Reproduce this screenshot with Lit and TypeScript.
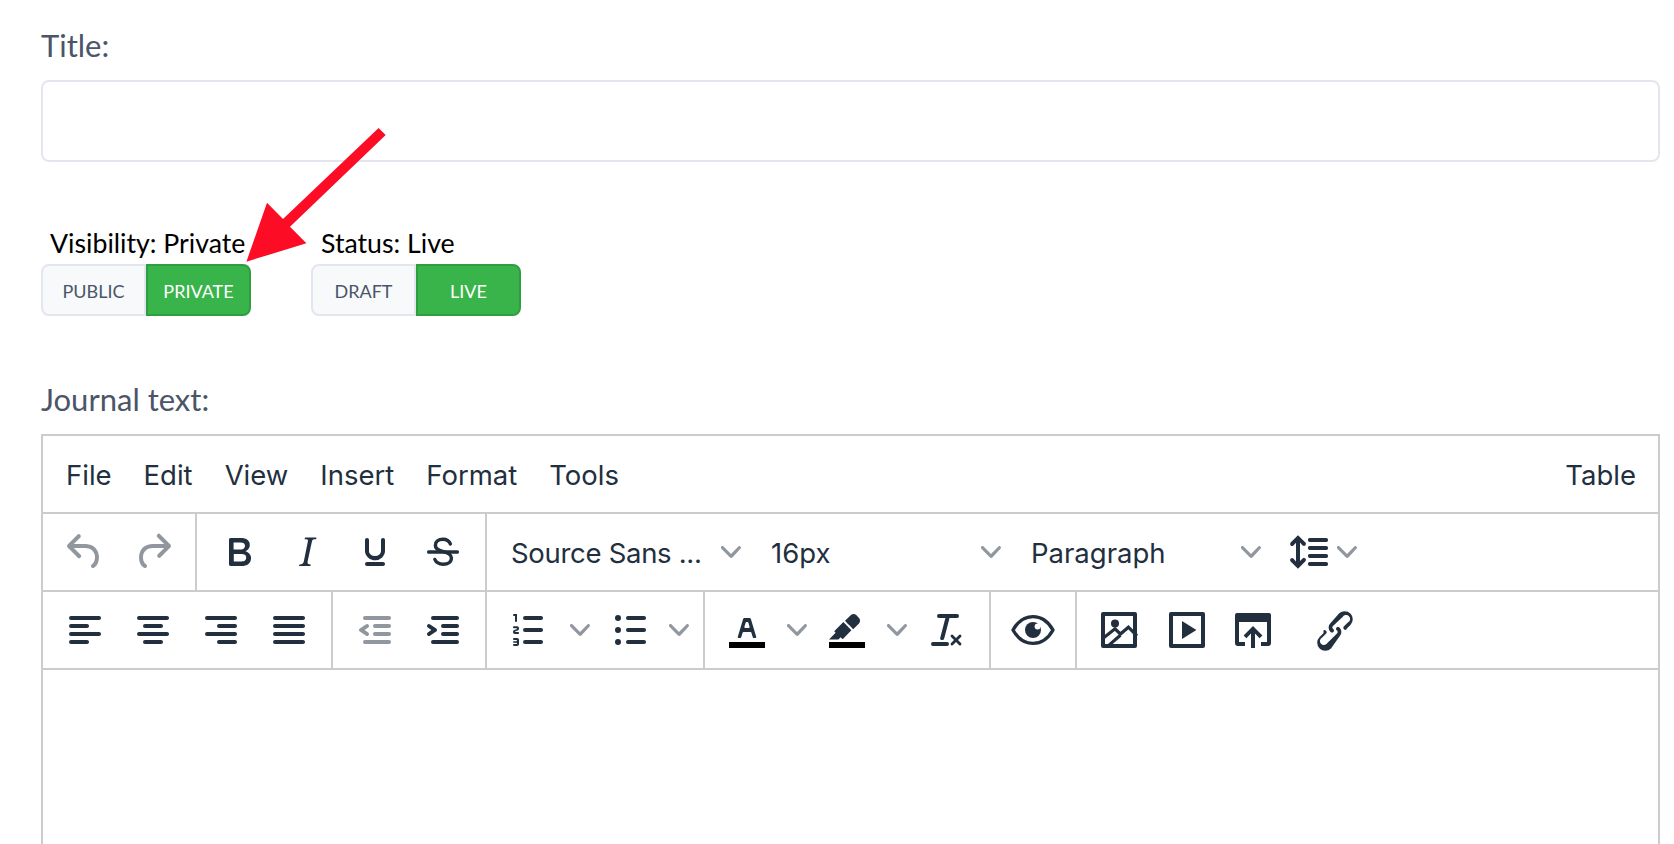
import { LitElement, html, css, svg } from "lit";
import { customElement } from "lit/decorators.js";

const P: Record<string, any> = {
  undo: svg`<path d="M6.4 8H12c3.7 0 6.2 2 6.8 5.1.6 2.7-.4 5.6-2.3 6.8a1 1 0 01-1-1.8c1.1-.6 1.8-2.7 1.4-4.6-.5-2.1-2.1-3.5-4.9-3.5H6.4l3.3 3.3a1 1 0 11-1.4 1.4l-5-5a1 1 0 010-1.4l5-5a1 1 0 011.4 1.4L6.4 8z"/>`,
  redo: svg`<path d="M17.6 10H12c-2.8 0-4.4 1.4-4.9 3.5-.4 2 .3 4 1.4 4.6a1 1 0 11-1 1.8c-2-1.2-2.9-4.1-2.3-6.8.6-3 3-5.1 6.8-5.1h5.6l-3.3-3.3a1 1 0 111.4-1.4l5 5a1 1 0 010 1.4l-5 5a1 1 0 01-1.4-1.4l3.3-3.3z"/>`,
  bold: svg`<path d="M7.8 19c-.3 0-.5 0-.6-.2l-.2-.5V5.7c0-.2 0-.4.2-.5l.6-.2h5c1.5 0 2.7.3 3.5 1 .7.6 1.1 1.4 1.1 2.5a3 3 0 01-.6 1.9c-.4.6-1 1-1.6 1.2.4.1.9.3 1.3.6s.8.7 1 1.2c.4.4.5 1 .5 1.6 0 1.3-.4 2.3-1.3 3-.8.7-2.1 1-3.8 1H7.8zm5-8.3c.6 0 1.2-.1 1.6-.5.4-.3.6-.7.6-1.3 0-1.1-.8-1.7-2.3-1.7H9.3v3.5h3.4zm.5 6c.7 0 1.3-.1 1.7-.4.4-.4.6-.9.6-1.5s-.2-1-.7-1.4c-.4-.3-1-.4-2-.4H9.4v3.8h4z"/>`,
  italic: svg`<path d="M16.7 4.7l-.1.9h-.3c-.6 0-1 0-1.4.3-.3.3-.4.6-.5 1.1l-2.1 9.8v.6c0 .5.4.8 1.4.8h.2l-.2.8H8l.2-.8h.2c1.1 0 1.8-.5 2-1.5l2-9.8.1-.5c0-.6-.4-.8-1.4-.8h-.3l.2-.9h5.8z"/>`,
  underline: svg`<path d="M16 5c.6 0 1 .4 1 1v5.5a4 4 0 01-.4 1.8l-1 1.4a5.3 5.3 0 01-5.5 1 5 5 0 01-1.6-1c-.5-.4-.8-.9-1.1-1.4a4 4 0 01-.4-1.8V6c0-.6.4-1 1-1s1 .4 1 1v5.5c0 .3 0 .6.2 1l.6.7a3.3 3.3 0 002.2.8 3.4 3.4 0 002.2-.8c.3-.2.4-.5.6-.8l.2-.9V6c0-.6.4-1 1-1zM8 17h8c.6 0 1 .4 1 1s-.4 1-1 1H8a1 1 0 010-2z"/>`,
  strike: svg`<path d="M4.800 11.100h14.400c.6 0 .8.4.8.9s-.3.9-.8.9H4.800c-.5 0-.8-.4-.8-.9s.3-.9.8-.9z"/><path fill="none" stroke="currentColor" stroke-width="1.700" stroke-linecap="round" d="M15.700 8C15 6.300 13.700 5.600 12 5.600c-2.300 0-3.800 1.200-3.800 3 0 2 1.800 2.600 4 3.200 2.400.6 4 1.400 4 3.200 0 2-1.700 3.100-4.100 3.100-2 0-3.500-.8-4.200-2.400"/>`,
  left: svg`<path d="M5 5h14c.6 0 1 .4 1 1s-.4 1-1 1H5a1 1 0 110-2zm0 4h8c.6 0 1 .4 1 1s-.4 1-1 1H5a1 1 0 110-2zm0 8h8c.6 0 1 .4 1 1s-.4 1-1 1H5a1 1 0 010-2zm0-4h14c.6 0 1 .4 1 1s-.4 1-1 1H5a1 1 0 010-2z"/>`,
  center: svg`<path d="M5 5h14c.6 0 1 .4 1 1s-.4 1-1 1H5a1 1 0 110-2zm3 4h8c.6 0 1 .4 1 1s-.4 1-1 1H8a1 1 0 110-2zm0 8h8c.6 0 1 .4 1 1s-.4 1-1 1H8a1 1 0 010-2zm-3-4h14c.6 0 1 .4 1 1s-.4 1-1 1H5a1 1 0 010-2z"/>`,
  right: svg`<path d="M5 5h14c.6 0 1 .4 1 1s-.4 1-1 1H5a1 1 0 110-2zm6 4h8c.6 0 1 .4 1 1s-.4 1-1 1h-8a1 1 0 010-2zm0 8h8c.6 0 1 .4 1 1s-.4 1-1 1h-8a1 1 0 010-2zm-6-4h14c.6 0 1 .4 1 1s-.4 1-1 1H5a1 1 0 010-2z"/>`,
  justify: svg`<path d="M5 5h14c.6 0 1 .4 1 1s-.4 1-1 1H5a1 1 0 110-2zm0 4h14c.6 0 1 .4 1 1s-.4 1-1 1H5a1 1 0 110-2zm0 4h14c.6 0 1 .4 1 1s-.4 1-1 1H5a1 1 0 010-2zm0 4h14c.6 0 1 .4 1 1s-.4 1-1 1H5a1 1 0 010-2z"/>`,
  outdent: svg`<path d="M7 5h12c.6 0 1 .4 1 1s-.4 1-1 1H7a1 1 0 110-2zm5 4h7c.6 0 1 .4 1 1s-.4 1-1 1h-7a1 1 0 010-2zm0 4h7c.6 0 1 .4 1 1s-.4 1-1 1h-7a1 1 0 010-2zm-5 4h12a1 1 0 010 2H7a1 1 0 010-2zm1.600-3.800a1 1 0 01-1.200 1.600l-3-2a1 1 0 010-1.600l3-2a1 1 0 011.200 1.600L6.800 12l1.800 1.200z"/>`,
  indent: svg`<path d="M7 5h12c.6 0 1 .4 1 1s-.4 1-1 1H7a1 1 0 110-2zm5 4h7c.6 0 1 .4 1 1s-.4 1-1 1h-7a1 1 0 010-2zm0 4h7c.6 0 1 .4 1 1s-.4 1-1 1h-7a1 1 0 010-2zm-5 4h12a1 1 0 010 2H7a1 1 0 010-2zm-2.600-3.800L6.200 12l-1.800-1.200a1 1 0 011.200-1.600l3 2a1 1 0 010 1.600l-3 2a1 1 0 11-1.200-1.600z"/>`,
  lineheight: svg`<path d="M21 5a1 1 0 01.1 2H13a1 1 0 01-.1-2H21zm0 4a1 1 0 01.1 2H13a1 1 0 01-.1-2H21zm0 4a1 1 0 01.1 2H13a1 1 0 01-.1-2H21zm0 4a1 1 0 01.1 2H13a1 1 0 01-.1-2H21zM7 3.600l3.700 3.700a1 1 0 01-1.300 1.500h-.1L8 7.300v9.200l1.300-1.300a1 1 0 011.300 0h.1c.4.4.4 1 0 1.300v.1L7 20.400l-3.700-3.700a1 1 0 011.300-1.500h.1L6 16.700V7.400L4.700 8.700a1 1 0 01-1.300 0h-.1a1 1 0 010-1.300v-.1L7 3.600z"/>`,
  numlist: svg`<path d="M10 17h8c.6 0 1 .4 1 1s-.4 1-1 1h-8a1 1 0 010-2zm0-6h8c.6 0 1 .4 1 1s-.4 1-1 1h-8a1 1 0 010-2zm0-6h8c.6 0 1 .4 1 1s-.4 1-1 1h-8a1 1 0 110-2z"/><path d="M6 4v3.500c0 .3-.2.5-.5.5a.5.5 0 01-.5-.5V5h-.5a.5.5 0 010-1H6zm-1 8.800l.2.2h1.300c.3 0 .5.2.5.5s-.2.5-.5.5H4.900a1 1 0 01-.9-1V13c0-.4.3-.8.6-1l1.200-.4.2-.3a.2.2 0 00-.2-.2H4.500a.5.5 0 01-.5-.5c0-.3.2-.5.5-.5h1.600c.5 0 .9.4.9 1v.1c0 .4-.3.8-.6 1l-1.200.4-.2.3zM7 17v2c0 .6-.4 1-1 1H4.500a.5.5 0 010-1h1.200c.2 0 .3-.1.3-.3 0-.2-.1-.3-.3-.3H4.400a.4.4 0 110-.8h1.300c.2 0 .3-.1.3-.3 0-.2-.1-.3-.3-.3H4.500a.5.5 0 110-1H6c.6 0 1 .4 1 1z"/>`,
  bullist: svg`<path d="M11 5h8c.6 0 1 .4 1 1s-.4 1-1 1h-8a1 1 0 010-2zm0 6h8c.6 0 1 .4 1 1s-.4 1-1 1h-8a1 1 0 010-2zm0 6h8c.6 0 1 .4 1 1s-.4 1-1 1h-8a1 1 0 010-2z"/><circle cx="6" cy="6" r="1.500"/><circle cx="6" cy="12" r="1.500"/><circle cx="6" cy="18" r="1.500"/>`,
  textcolor: svg`<path fill="#000" d="M3 18h18v3H3z"/><path d="M8.700 16h-.8a.5.5 0 01-.5-.6l2.700-9c.1-.3.3-.4.5-.4h2.800c.2 0 .4.1.5.4l2.700 9a.5.5 0 01-.5.6h-.8a.5.5 0 01-.4-.4l-.7-2.200c0-.3-.3-.4-.5-.4h-3.400c-.2 0-.4.1-.5.4l-.7 2.200c0 .3-.2.4-.4.4zm2.600-7.600l-.6 2a.5.5 0 00.5.6h1.600a.5.5 0 00.5-.6l-.6-2c0-.3-.3-.4-.5-.4h-.4c-.2 0-.4.1-.5.4z"/>`,
  highlight: svg`<path fill="#000" d="M3 18h18v3H3z"/><path d="M7.700 16.700H3l3.300-3.300-.7-.8L10.200 8l4 4.100-4 4.200c-.2.2-.6.2-.8 0l-.6-.7-1.100 1.100zm5-7.500L11 7.400l3-2.900a2 2 0 012.600 0L18 6c.7.7.7 2 0 2.700l-2.900 2.900-1.800-1.800-.5-.6"/>`,
  clear: svg`<path d="M13.200 6a1 1 0 010 .2l-2.600 10a1 1 0 01-1 .8h-.2a.8.8 0 01-.8-1l2.600-10H8a1 1 0 110-2h9a1 1 0 010 2h-3.800zM5 18h7a1 1 0 010 2H5a1 1 0 010-2zm13 1.500L16.500 18 15 19.500a.7.7 0 01-1-1l1.500-1.500-1.500-1.500a.7.7 0 011-1l1.500 1.500 1.500-1.500a.7.7 0 011 1L17.500 17l1.500 1.500a.7.7 0 01-1 1z"/>`,
  eye: svg`<path fill="none" stroke="currentColor" stroke-width="1.700" stroke-linejoin="round" d="M2 12C4.400 7.700 8 5.300 12 5.300S19.600 7.700 22 12C19.600 16.300 16 18.700 12 18.700S4.400 16.300 2 12z"/><circle cx="12" cy="12" r="4"/><circle fill="#fff" cx="14.300" cy="10.200" r="1.500"/>`,
  image: svg`<path fill-rule="evenodd" d="M4 3h16a1 1 0 0 1 1 1v16a1 1 0 0 1-1 1H4a1 1 0 0 1-1-1V4a1 1 0 0 1 1-1zm1 2v14h14V5H5z"/><circle cx="10" cy="8.700" r="2"/><path fill="none" stroke="currentColor" stroke-width="1.600" d="M4.200 16l5.800-4.600 2.700 2.600 4-3.400 4.300 4.300M6.700 19.800l6-5.200"/>`,
  play: svg`<path fill-rule="evenodd" d="M4 3h16a1 1 0 0 1 1 1v16a1 1 0 0 1-1 1H4a1 1 0 0 1-1-1V4a1 1 0 0 1 1-1zm1 2v14h14V5H5z"/><path d="M9.500 7.500v9l7.200-4.500z"/>`,
  upload: svg`<path d="M4 3.500h16a1 1 0 0 1 1 1v14a1.500 1.500 0 0 1-1.500 1.500H16v-2h3V8H5v10h3v2H4.500A1.500 1.500 0 0 1 3 18.500v-14a1 1 0 0 1 1-1z"/><path d="M11 21v-7.200l-2.300 2.300-1.400-1.400L12 10l4.700 4.700-1.400 1.400-2.300-2.300V21z"/>`,
  link: svg`<path d="M6.200 12.300a1 1 0 011.400 1.400l-2 2a2 2 0 102.600 2.800l4.800-4.800a1 1 0 000-1.400 1 1 0 111.400-1.300 2.900 2.900 0 010 4L10 21.200a4 4 0 01-5.700-5.700l2-2zm11.600-.6a1 1 0 01-1.400-1.400l2-2a2 2 0 10-2.600-2.800L11 10a1 1 0 000 1.400 1 1 0 11-1.400 1.300 2.900 2.900 0 010-4L14 3.800a4 4 0 015.700 5.700l-2 2z"/>`,
};

const icon = (n: string) => html`<svg class="ico" viewBox="0 0 24 24" fill="currentColor">${P[n]}</svg>`;
const chev = html`<svg class="chev" viewBox="0 0 10 10" fill="currentColor"><path d="M8.700 2.200c.3-.3.8-.3 1 0 .4.4.4.9 0 1.200L5.700 7.800c-.3.3-.9.3-1.200 0L.2 3.400a.8.8 0 010-1.200c.3-.3.8-.3 1.100 0L5 6l3.700-3.800z"/></svg>`;

@customElement("app-root")
export class AppRoot extends LitElement {
  static styles = css`
    :host { display: block; position: relative; height: 844px; overflow: hidden; background: #fff; box-sizing: border-box; padding: 0 14px 0 41px; font-family: Lato, sans-serif; }
    .lbl { color: #4a5568; font-size: 31px; line-height: 40px; }
    .title-lbl { margin-top: 25px; margin-bottom: 15px; }
    .input { height: 82px; box-sizing: border-box; border: 2px solid #e3e6ee; border-radius: 8px; background: #fff; }
    .toggles { display: flex; gap: 60px; margin-top: 63px; }
    .tg-lbl { font-size: 26.700px; line-height: 36px; color: #000; margin-bottom: 3px; padding-left: 9px; }
    .tg-lbl.status { padding-left: 10px; }
    .tg { display: flex; width: 210px; height: 52px; font-size: 18px; padding-top: 0; }
    .tg div { flex: 1; display: flex; align-items: center; justify-content: center; box-sizing: border-box; padding-top: 1px; }
    .off { background: #f8f9fb; color: #4a5568; border: 2px solid #e3e6ee; border-radius: 8px 0 0 8px; }
    .on { background: #38b44a; color: #fff; border: 2px solid #2f9e40; border-radius: 0 8px 8px 0; }
    .journal { margin-top: 63px; margin-bottom: 15px; }
    .editor { border: 2px solid #ccc; border-bottom: 0; height: 600px; box-sizing: border-box; color: #222f3e; font-family: Inter, sans-serif; }
    .menu { display: flex; align-items: center; height: 78px; padding: 2px 22px 0 23px; border-bottom: 2px solid #ccc; font-size: 27.500px; gap: 32px; box-sizing: border-box; }
    .menu .sp { flex: 1; }
    .row { display: flex; height: 78px; box-sizing: border-box; border-bottom: 2px solid #ccc; }
    .grp { display: flex; align-items: center; padding: 0 8px; border-right: 2px solid #ccc; }
    .grp.last { border-right: 0; }
    .btn { width: 68px; height: 76px; display: flex; align-items: center; justify-content: center; flex: none; }
    .btn.dis { color: rgba(34,47,62,.5); }
    .btn.split { width: 67px; }
    .btn.up { margin-left: -2px; margin-right: 14px; }
    .cb { width: 33px; height: 76px; display: flex; align-items: center; justify-content: center; color: rgba(34,47,62,.5); flex: none; }
    .cb.narrow { width: 32px; }
    .ico { width: 48px; height: 48px; display: block; }
    .chev { width: 20px; height: 20px; display: block; }
    .sel { width: 260px; height: 76px; box-sizing: border-box; padding: 2px 14px 0 16px; display: flex; align-items: center; justify-content: space-between; font-size: 27.500px; flex: none; }
    .sel .chev { color: rgba(34,47,62,.5); margin-top: -2px; }
    .sel .tight { letter-spacing: -0.300px; }
    .lh { display: flex; align-items: center; padding-left: 9px; }
    .lh .chev { color: rgba(34,47,62,.5); margin-left: 5px; }
    .arrow { position: absolute; left: 0; top: 0; pointer-events: none; }
  `;

  render() {
    const b = (n: string, cls = "") => html`<div class="btn ${cls}">${icon(n)}</div>`;
    return html`
      <div class="lbl title-lbl">Title:</div>
      <div class="input"></div>
      <div class="toggles">
        <div>
          <div class="tg-lbl">Visibility: Private</div>
          <div class="tg"><div class="off">PUBLIC</div><div class="on">PRIVATE</div></div>
        </div>
        <div>
          <div class="tg-lbl status">Status: Live</div>
          <div class="tg"><div class="off">DRAFT</div><div class="on">LIVE</div></div>
        </div>
      </div>
      <div class="lbl journal">Journal text:</div>
      <div class="editor">
        <div class="menu">
          <span>File</span><span>Edit</span><span>View</span><span>Insert</span><span>Format</span><span>Tools</span>
          <span class="sp"></span><span>Table</span>
        </div>
        <div class="row">
          <div class="grp">${b("undo", "dis")}${b("redo", "dis")}</div>
          <div class="grp">${b("bold")}${b("italic")}${b("underline")}${b("strike")}</div>
          <div class="grp last">
            <div class="sel"><span class="tight">Source Sans ...</span>${chev}</div>
            <div class="sel"><span>16px</span>${chev}</div>
            <div class="sel"><span>Paragraph</span>${chev}</div>
            <div class="lh">${icon("lineheight")}${chev}</div>
          </div>
        </div>
        <div class="row">
          <div class="grp">${b("left")}${b("center")}${b("right")}${b("justify")}</div>
          <div class="grp">${b("outdent", "dis")}${b("indent")}</div>
          <div class="grp">
            ${b("numlist")}<div class="cb">${chev}</div>
            ${b("bullist", "split")}<div class="cb narrow">${chev}</div>
          </div>
          <div class="grp">
            ${b("textcolor")}<div class="cb narrow">${chev}</div>
            ${b("highlight")}<div class="cb narrow">${chev}</div>
            ${b("clear")}
          </div>
          <div class="grp">${b("eye")}</div>
          <div class="grp last">${b("image")}${b("play")}${b("upload", "up")}${b("link")}</div>
        </div>
      </div>
      <svg class="arrow" width="420" height="300" viewBox="0 0 420 300">
        <polygon fill="#fc0d25" points="378.600,128 385.700,135 290,226.700 306.400,243.300 246.400,261.700 267,202.700 283,219"></polygon>
      </svg>
    `;
  }
}
